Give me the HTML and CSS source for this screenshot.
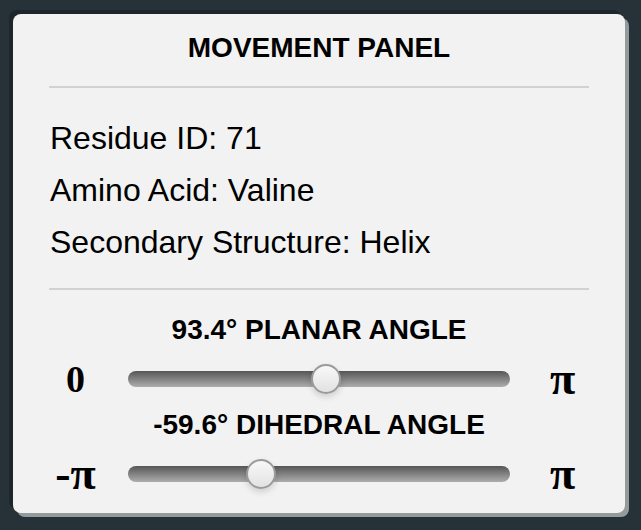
FILE: index.html
```html
<!DOCTYPE html>
<html>
<head>
<meta charset="utf-8">
<link rel="stylesheet" href="styles.css">
</head>
<body>
<div class="panel">
  <div class="title">MOVEMENT PANEL</div>
  <div class="sep"></div>
  <div class="info">
    <div class="line">Residue ID: 71</div>
    <div class="line">Amino Acid: Valine</div>
    <div class="line">Secondary Structure: Helix</div>
  </div>
  <div class="sep sep2"></div>
  <div class="angle-label first">93.4° PLANAR ANGLE</div>
  <div class="slider-row">
    <div class="end-label"><span class="zero">0</span></div>
    <input class="slider" type="range" min="0" max="180" step="0.1" value="93.4">
    <div class="end-label"><span class="pi">π</span></div>
  </div>
  <div class="angle-label">-59.6° DIHEDRAL ANGLE</div>
  <div class="slider-row">
    <div class="end-label"><span class="pi">-π</span></div>
    <input class="slider" type="range" min="-180" max="180" step="0.1" value="-59.6">
    <div class="end-label"><span class="pi">π</span></div>
  </div>
</div>
</body>
</html>
```
FILE: styles.css
```css
html, body {
  margin: 0;
  padding: 0;
}
body {
  background: #263238;
  width: 641px;
  height: 530px;
  overflow: hidden;
  padding: 14px 0 0 13px;
  box-sizing: border-box;
  font-family: "Liberation Sans", Arial, sans-serif;
  color: #000;
}
.panel {
  width: 612px;
  height: 499px;
  box-sizing: border-box;
  background: #f2f2f2;
  border-radius: 8px;
  box-shadow: -4px -4px 0 #1d262a, 4px 4px 0 #959b9d;
  padding: 18px 36px 0 36px;
  display: flex;
  flex-direction: column;
}
.title {
  font-size: 28px;
  font-weight: bold;
  line-height: 32px;
  text-align: center;
}
.sep {
  height: 2px;
  background: #d2d2d2;
  margin-top: 22px;
}
.sep2 {
  margin-top: 20px;
}
.info {
  margin-top: 24px;
  padding-left: 1px;
}
.line {
  font-size: 32px;
  line-height: 52px;
  white-space: nowrap;
}
.angle-label {
  font-size: 28px;
  font-weight: bold;
  line-height: 32px;
  text-align: center;
  margin-top: 10px;
}
.angle-label.first {
  margin-top: 24px;
}
.slider-row {
  margin-top: 13px;
  height: 40px;
  display: grid;
  grid-template-columns: 53px 382px 53px;
  justify-content: space-between;
  align-items: center;
}
.end-label {
  height: 40px;
  display: flex;
  align-items: center;
  justify-content: center;
  font-family: "Liberation Serif", "Times New Roman", serif;
  font-weight: bold;
}
.zero {
  font-size: 38px;
  line-height: 1;
}
.pi {
  font-size: 46px;
  line-height: 1;
  font-weight: bold;
}
.slider {
  -webkit-appearance: none;
  appearance: none;
  width: 382px;
  height: 32px;
  margin: 0;
  padding: 0;
  background: transparent;
}
.slider::-webkit-slider-runnable-track {
  height: 16px;
  border-radius: 8px;
  background: linear-gradient(#565656, #adadad);
}
.slider::-webkit-slider-thumb {
  -webkit-appearance: none;
  appearance: none;
  box-sizing: border-box;
  width: 30px;
  height: 30px;
  margin-top: -7px;
  border-radius: 50%;
  border: 2px solid #9a9a9a;
  background: linear-gradient(#f8f8f8, #e2e2e2);
  box-shadow: 0 3px 6px rgba(0, 0, 0, 0.15);
}
```
